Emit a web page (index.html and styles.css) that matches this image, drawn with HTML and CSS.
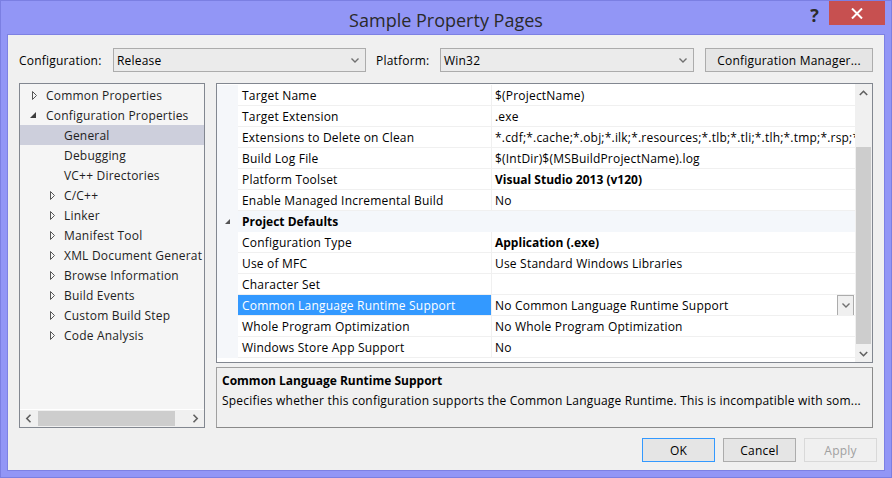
FILE: index.html
```html
<!DOCTYPE html>
<html>
<head>
<meta charset="utf-8">
<title>Sample Property Pages</title>
<link rel="stylesheet" href="styles.css">
</head>
<body>
<div class="window">
  <div class="titlebar">
    <div class="tb-left"></div>
    <div class="title">Sample Property Pages</div>
    <div class="tb-right">
      <span class="help">?</span>
      <span class="close"><svg width="12" height="11" viewBox="0 0 12 11"><path d="M1 0.5 L11 10.5 M11 0.5 L1 10.5" stroke="#fff" stroke-width="2"/></svg></span>
    </div>
  </div>
  <div class="client">
    <div class="toprow">
      <span class="lbl lbl-config">Configuration:</span>
      <div class="select select-config"><span>Release</span><svg class="chev" width="8" height="5" viewBox="0 0 8 5"><path d="M0.5 0.5 L4 4 L7.5 0.5" stroke="#707070" stroke-width="1.4" fill="none"/></svg></div>
      <span class="lbl lbl-platform">Platform:</span>
      <div class="select select-platform"><span>Win32</span><svg class="chev" width="8" height="5" viewBox="0 0 8 5"><path d="M0.5 0.5 L4 4 L7.5 0.5" stroke="#707070" stroke-width="1.4" fill="none"/></svg></div>
      <div class="btn btn-cm">Configuration Manager...</div>
    </div>
    <div class="main">
      <div class="tree">
        <div class="tree-items">
          <div class="ti l0"><svg class="tw" width="5" height="9" viewBox="0 0 5 9"><path d="M0.5 0.5 L4.5 4.5 L0.5 8.5 Z" fill="none" stroke="#555"/></svg><span>Common Properties</span></div>
          <div class="ti l0"><svg class="tw tw-open" width="6" height="6" viewBox="0 0 6 6"><path d="M6 0 L6 6 L0 6 Z" fill="#3c3c3c"/></svg><span>Configuration Properties</span></div>
          <div class="ti l1 leaf sel"><span>General</span></div>
          <div class="ti l1 leaf"><span>Debugging</span></div>
          <div class="ti l1 leaf"><span>VC++ Directories</span></div>
          <div class="ti l1"><svg class="tw" width="5" height="9" viewBox="0 0 5 9"><path d="M0.5 0.5 L4.5 4.5 L0.5 8.5 Z" fill="none" stroke="#555"/></svg><span>C/C++</span></div>
          <div class="ti l1"><svg class="tw" width="5" height="9" viewBox="0 0 5 9"><path d="M0.5 0.5 L4.5 4.5 L0.5 8.5 Z" fill="none" stroke="#555"/></svg><span>Linker</span></div>
          <div class="ti l1"><svg class="tw" width="5" height="9" viewBox="0 0 5 9"><path d="M0.5 0.5 L4.5 4.5 L0.5 8.5 Z" fill="none" stroke="#555"/></svg><span>Manifest Tool</span></div>
          <div class="ti l1"><svg class="tw" width="5" height="9" viewBox="0 0 5 9"><path d="M0.5 0.5 L4.5 4.5 L0.5 8.5 Z" fill="none" stroke="#555"/></svg><span>XML Document Generat</span></div>
          <div class="ti l1"><svg class="tw" width="5" height="9" viewBox="0 0 5 9"><path d="M0.5 0.5 L4.5 4.5 L0.5 8.5 Z" fill="none" stroke="#555"/></svg><span>Browse Information</span></div>
          <div class="ti l1"><svg class="tw" width="5" height="9" viewBox="0 0 5 9"><path d="M0.5 0.5 L4.5 4.5 L0.5 8.5 Z" fill="none" stroke="#555"/></svg><span>Build Events</span></div>
          <div class="ti l1"><svg class="tw" width="5" height="9" viewBox="0 0 5 9"><path d="M0.5 0.5 L4.5 4.5 L0.5 8.5 Z" fill="none" stroke="#555"/></svg><span>Custom Build Step</span></div>
          <div class="ti l1"><svg class="tw" width="5" height="9" viewBox="0 0 5 9"><path d="M0.5 0.5 L4.5 4.5 L0.5 8.5 Z" fill="none" stroke="#555"/></svg><span>Code Analysis</span></div>
        </div>
        <div class="hscroll">
          <svg class="arr" width="6" height="9" viewBox="0 0 6 9"><path d="M5 0.8 L1.3 4.5 L5 8.2" stroke="#606060" stroke-width="1.6" fill="none"/></svg>
          <div class="htrack"><div class="hthumb"></div></div>
          <svg class="arr" width="6" height="9" viewBox="0 0 6 9"><path d="M1 0.8 L4.7 4.5 L1 8.2" stroke="#606060" stroke-width="1.6" fill="none"/></svg>
        </div>
      </div>
      <div class="right">
        <div class="grid">
          <div class="rows">
            <div class="row"><div class="gut"></div><div class="name">Target Name</div><div class="val">$(ProjectName)</div></div>
            <div class="row"><div class="gut"></div><div class="name">Target Extension</div><div class="val">.exe</div></div>
            <div class="row"><div class="gut"></div><div class="name">Extensions to Delete on Clean</div><div class="val">*.cdf;*.cache;*.obj;*.ilk;*.resources;*.tlb;*.tli;*.tlh;*.tmp;*.rsp;*.pgc</div></div>
            <div class="row"><div class="gut"></div><div class="name">Build Log File</div><div class="val">$(IntDir)$(MSBuildProjectName).log</div></div>
            <div class="row"><div class="gut"></div><div class="name">Platform Toolset</div><div class="val b">Visual Studio 2013 (v120)</div></div>
            <div class="row"><div class="gut"></div><div class="name">Enable Managed Incremental Build</div><div class="val">No</div></div>
            <div class="row cat"><div class="gut"><svg width="5" height="5" viewBox="0 0 5 5"><path d="M5 0 L5 5 L0 5 Z" fill="#555"/></svg></div><div class="catname">Project Defaults</div></div>
            <div class="row"><div class="gut"></div><div class="name">Configuration Type</div><div class="val b">Application (.exe)</div></div>
            <div class="row"><div class="gut"></div><div class="name">Use of MFC</div><div class="val">Use Standard Windows Libraries</div></div>
            <div class="row"><div class="gut"></div><div class="name">Character Set</div><div class="val"></div></div>
            <div class="row"><div class="gut"></div><div class="name selname">Common Language Runtime Support</div><div class="val val-dd"><span>No Common Language Runtime Support</span><div class="ddbtn"><svg width="8" height="5" viewBox="0 0 8 5"><path d="M0.5 0.5 L4 4 L7.5 0.5" stroke="#707070" stroke-width="1.4" fill="none"/></svg></div></div></div>
            <div class="row"><div class="gut"></div><div class="name">Whole Program Optimization</div><div class="val">No Whole Program Optimization</div></div>
            <div class="row"><div class="gut"></div><div class="name">Windows Store App Support</div><div class="val">No</div></div>
          </div>
          <div class="vscroll">
            <div class="varr"><svg width="9" height="6" viewBox="0 0 9 6"><path d="M0.8 5 L4.5 1.3 L8.2 5" stroke="#606060" stroke-width="1.6" fill="none"/></svg></div>
            <div class="vtrack"><div class="vthumb"></div></div>
            <div class="varr"><svg width="9" height="6" viewBox="0 0 9 6"><path d="M0.8 1 L4.5 4.7 L8.2 1" stroke="#606060" stroke-width="1.6" fill="none"/></svg></div>
          </div>
        </div>
        <div class="desc">
          <div class="desc-title">Common Language Runtime Support</div>
          <div class="desc-text">Specifies whether this configuration supports the Common Language Runtime. This is incompatible with som...</div>
        </div>
      </div>
    </div>
    <div class="buttons">
      <div class="btn btn-ok">OK</div>
      <div class="btn">Cancel</div>
      <div class="btn btn-dis">Apply</div>
    </div>
  </div>
</div>
</body>
</html>
```

FILE: styles.css
```css
html, body {
  margin: 0;
  padding: 0;
}
body {
  width: 892px;
  height: 478px;
  overflow: hidden;
  background: #9296f6;
  font-family: "Open Sans", "Noto Sans", sans-serif;
  font-size: 12px;
  letter-spacing: 0.2px;
  color: #000;
}
.window {
  box-sizing: border-box;
  width: 892px;
  height: 478px;
  border: 1px solid #7b7fe2;
  background: #9296f6;
  padding: 0 6px 6px 6px;
  display: flex;
  flex-direction: column;
}
.titlebar {
  height: 33px;
  display: grid;
  grid-template-columns: 1fr auto 1fr;
  align-items: start;
}
.title {
  font-size: 18px;
  letter-spacing: 0;
  line-height: 20px;
  color: #2a2a2a;
  padding-top: 9px;
  white-space: nowrap;
}
.tb-right {
  justify-self: end;
  display: flex;
  align-items: flex-start;
}
.help {
  font-size: 18px;
  font-weight: bold;
  color: #2a2a2a;
  line-height: 18px;
  margin-top: 5px;
  margin-right: 10px;
}
.close {
  width: 56px;
  height: 24px;
  background: #c75050;
  display: flex;
  align-items: center;
  justify-content: center;
}
.client {
  flex: 1;
  min-height: 0;
  border: 1px solid #7d81e3;
  background: #f0f0f0;
  padding: 13px 11px 0 11px;
  display: flex;
  flex-direction: column;
}
.toprow {
  height: 24px;
  display: flex;
  align-items: center;
}
.lbl {
  white-space: nowrap;
  padding-top: 1px;
}
.lbl-config { width: 94px; flex: none; }
.lbl-platform { width: 64px; margin-left: 10px; flex: none; }
.select {
  box-sizing: border-box;
  height: 24px;
  border: 1px solid #acacac;
  background: #ebebeb;
  display: flex;
  align-items: center;
  justify-content: space-between;
  padding: 1px 6px 0 3px;
  flex: none;
}
.select-config { width: 253px; }
.select-platform { width: 254px; }
.btn {
  box-sizing: border-box;
  height: 24px;
  border: 1px solid #acacac;
  background: #e5e5e5;
  display: flex;
  align-items: center;
  justify-content: center;
  white-space: nowrap;
  padding-top: 1px;
  flex: none;
}
.btn-cm { width: 168px; margin-left: 11px; }
.main {
  margin-top: 11px;
  height: 345px;
  display: flex;
  gap: 11px;
}
.tree {
  box-sizing: border-box;
  width: 186px;
  flex: none;
  border: 1px solid #828790;
  background: #f5f5f5;
  display: flex;
  flex-direction: column;
  overflow: hidden;
}
.tree-items {
  flex: 1;
  padding-top: 1px;
  overflow: hidden;
}
.ti {
  height: 20px;
  display: flex;
  align-items: center;
  white-space: nowrap;
  color: #1e1e1e;
}
.ti span { padding-top: 1px; }
.ti.l0 { padding-left: 12px; }
.ti.l1 { padding-left: 30px; }
.ti .tw { width: 5px; margin-right: 9px; flex: none; }
.ti .tw-open { width: 6px; margin-left: -2px; margin-right: 10px; }
.ti.leaf { padding-left: 44px; }
.ti.sel { background: #cdcfdc; }
.hscroll {
  height: 17px;
  border-top: 1px solid #ffffff;
  background: #f0f0f0;
  display: flex;
  align-items: center;
  flex: none;
}
.hscroll .arr { width: 17px; flex: none; }
.htrack {
  flex: 1;
  height: 15px;
  padding-left: 1px;
}
.hthumb {
  width: 137px;
  height: 15px;
  background: #cdcdcd;
}
.right {
  flex: 1;
  min-width: 0;
  display: flex;
  flex-direction: column;
  gap: 4px;
}
.grid {
  box-sizing: border-box;
  height: 280px;
  border: 1px solid #828790;
  background: #ffffff;
  display: flex;
  min-width: 0;
}
.rows {
  flex: 1;
  min-width: 0;
  padding-top: 1px;
  overflow: hidden;
}
.row {
  height: 20px;
  display: flex;
  border-bottom: 1px solid #f0f0f0;
}
.gut {
  width: 21px;
  flex: none;
  background: #f5f7fa;
  display: flex;
  align-items: center;
  justify-content: center;
}
.row .gut { margin-bottom: -1px; }
.name {
  width: 249px;
  flex: none;
  padding-left: 4px;
  padding-top: 1px;
  height: 19px;
  border-right: 1px solid #f0f0f0;
  line-height: 20px;
  white-space: nowrap;
  overflow: hidden;
}
.selname {
  background: #3399ff;
  color: #fff;
}
.val {
  flex: 1;
  padding-left: 3px;
  padding-top: 1px;
  line-height: 20px;
  height: 19px;
  white-space: nowrap;
  overflow: hidden;
  min-width: 0;
}
.b { font-weight: bold; letter-spacing: 0; }
.val-dd {
  display: flex;
  justify-content: space-between;
  align-items: flex-start;
  padding-top: 0;
  height: 20px;
}
.val-dd span { padding-top: 1px; line-height: 20px; }
.ddbtn {
  box-sizing: border-box;
  width: 17px;
  height: 21px;
  border: 1px solid #acacac;
  background: #f0f0f0;
  display: flex;
  align-items: center;
  justify-content: center;
  margin-right: 1px;
  flex: none;
}
.row.cat {
  background: #f4f7fb;
  border-bottom-color: #f4f7fb;
}
.catname {
  font-weight: bold;
  letter-spacing: 0;
  padding-left: 4px;
  padding-top: 1px;
  line-height: 20px;
}
.vscroll {
  width: 17px;
  flex: none;
  background: #f0f0f0;
  display: flex;
  flex-direction: column;
}
.varr {
  height: 17px;
  display: flex;
  align-items: center;
  justify-content: center;
}
.vtrack {
  flex: 1;
  padding-top: 46px;
}
.vthumb {
  width: 15px;
  margin-left: 1px;
  height: 197px;
  background: #cdcdcd;
}
.desc {
  box-sizing: border-box;
  height: 61px;
  border: 1px solid #a0a0a0;
  border-right-color: #8a8a8a;
  border-bottom-color: #8a8a8a;
  background: #f0f0f0;
  padding: 3px 5px 0 5px;
}
.desc-title {
  font-weight: bold;
  letter-spacing: 0;
  line-height: 20px;
}
.desc-text {
  line-height: 20px;
  white-space: nowrap;
  overflow: hidden;
}
.buttons {
  margin-top: 10px;
  margin-right: -4px;
  display: flex;
  justify-content: flex-end;
  gap: 8px;
}
.buttons .btn { width: 73px; }
.btn-ok { border-color: #3399ff; }
.btn-dis {
  border-color: #d9d9d9;
  background: #f0f0f0;
  color: #a0a0a0;
}
```
